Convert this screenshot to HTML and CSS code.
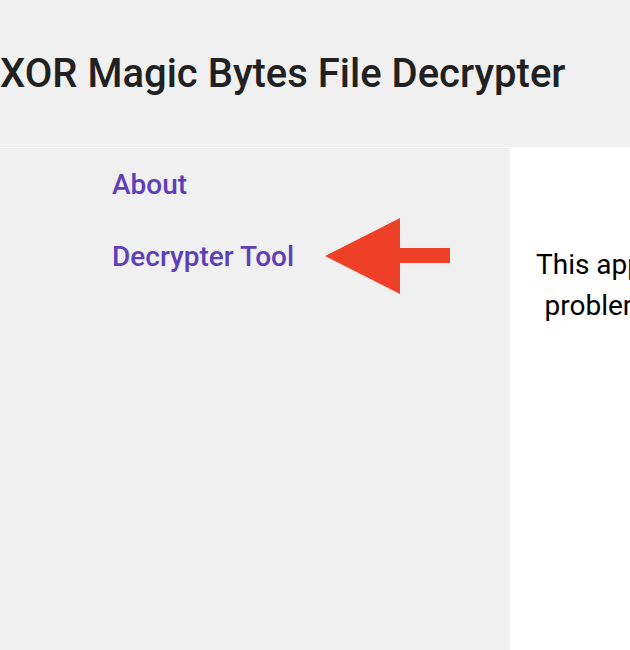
FILE: index.html
```html
<!DOCTYPE html>
<html lang="en">
<head>
<meta charset="utf-8">
<title>XOR Magic Bytes File Decrypter</title>
<link rel="stylesheet" href="styles.css">
</head>
<body>
<header class="header">
  <h1 class="title">XOR Magic Bytes File Decrypter</h1>
</header>
<div class="layout">
  <nav class="sidebar">
    <a class="nav-link" href="#about">About</a>
    <div class="nav-row">
      <a class="nav-link" href="#tool">Decrypter Tool</a>
      <svg class="arrow" width="126" height="76" viewBox="0 0 126 76" aria-hidden="true">
        <polygon points="0,38 75,0 75,30 125,30 125,45 75,45 75,76" fill="#ee4027"/>
      </svg>
    </div>
  </nav>
  <main class="main">
    <p class="intro">This app solves a common capture the flag<br>problem: a file XOR encrypted with its key.</p>
  </main>
</div>
</body>
</html>
```
FILE: styles.css
```css
html, body {
  margin: 0;
  padding: 0;
  background: #ffffff;
  font-family: Roboto, "Liberation Sans", sans-serif;
  overflow: hidden;
}
.header {
  background: #f0f0f0;
  height: 147px;
  display: flex;
  align-items: center;
  border-bottom: 1px solid #ffffff;
}
.title {
  margin: 0;
  font-size: 40px;
  font-weight: 500;
  color: #212121;
  white-space: nowrap;
}
.layout {
  display: flex;
  min-height: 502px;
}
.sidebar {
  width: 510px;
  flex: none;
  background: #f0f0f0;
  padding: 20px 0 0 112px;
  box-sizing: border-box;
  display: flex;
  flex-direction: column;
  align-items: flex-start;
  gap: 17px;
}
.nav-row {
  display: flex;
  align-items: center;
  gap: 31px;
}
.nav-link {
  font-size: 28px;
  font-weight: 500;
  color: #5e3fb8;
  text-decoration: none;
  white-space: nowrap;
}
.arrow {
  display: block;
}
.main {
  flex: none;
  width: 600px;
  padding-top: 96px;
  overflow: hidden;
}
.intro {
  margin: 0;
  padding: 0 0 0 26px;
  white-space: nowrap;
  display: inline-block;
  font-size: 28px;
  line-height: 41px;
  text-align: center;
  color: #000;
}
```
